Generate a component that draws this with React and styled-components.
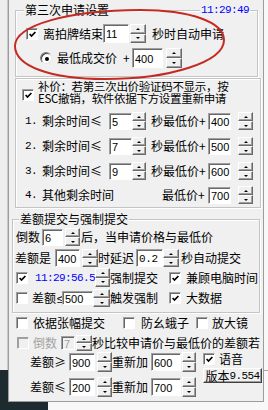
import React from "react";
import styled, { createGlobalStyle } from "styled-components";

const GlobalStyle = createGlobalStyle`
  html, body { margin: 0; padding: 0; background: #f8f8f8; }
  body {
    font-family: "Noto Sans CJK SC", "Noto Sans", sans-serif;
    font-size: 12px;
    color: #000;
  }
  #root { width: 268px; height: 410px; }
`;

const Screen = styled.div`
  position: relative;
  width: 268px;
  height: 410px;
  overflow: hidden;
  display: flex;
`;

const Edge = styled.div`
  width: ${(p) => p.$w}px;
  display: flex;
  flex-direction: column;
  flex-shrink: 0;
`;

const EdgePart = styled.div`
  box-sizing: border-box;
  height: ${(p) => (p.$h ? `${p.$h}px` : "auto")};
  width: ${(p) => (p.$w ? `${p.$w}px` : "auto")};
  flex: ${(p) => (p.$h ? "none" : 1)};
  background: ${(p) => p.$bg};
  border-right: ${(p) => (p.$lineR ? "1px solid #c8c8c8" : "none")};
  border-bottom: ${(p) => (p.$lineB ? "1px solid #a8a8a8" : "none")};
`;

const CenterCol = styled.div`
  width: 256px;
  display: flex;
  flex-direction: column;
  flex-shrink: 0;
`;

const Window = styled.div`
  box-sizing: border-box;
  width: 256px;
  height: 402px;
  background: #f0f0f0;
  border-left: 1px solid #9c9c9c;
  border-right: 1px solid #9c9c9c;
  border-bottom: 1px solid #9c9c9c;
  display: flex;
  flex-direction: column;
  align-items: flex-start;
`;

const BottomStrip = styled.div`
  flex: 1;
  display: flex;
`;

const Group = styled.div`
  position: relative;
  box-sizing: border-box;
  width: ${(p) => p.$w}px;
  margin: ${(p) => p.$mt}px 0 0 ${(p) => p.$ml}px;
  padding-bottom: ${(p) => p.$pb}px;
  border: 1px solid #c4c4c4;
  box-shadow: inset 1px 1px 0 #ffffff, 1px 1px 0 #ffffff;
  display: flex;
  flex-direction: column;
  align-items: flex-start;
  flex-shrink: 0;
`;

const GroupTitle = styled.span`
  position: absolute;
  top: -8px;
  left: ${(p) => p.$x}px;
  height: 14px;
  line-height: 14px;
  padding: 0 1px;
  background: #f0f0f0;
  white-space: nowrap;
`;

const TimeTag = styled.span`
  position: absolute;
  top: -7px;
  right: ${(p) => p.$right}px;
  height: 13px;
  line-height: 13px;
  padding: 0 1px;
  background: #f0f0f0;
  color: #0000ff;
  font-family: "Liberation Mono", monospace;
  font-size: 11px;
  letter-spacing: -0.6px;
  white-space: nowrap;
`;

const Row = styled.div`
  display: flex;
  align-items: ${(p) => p.$align || "center"};
  height: ${(p) => (p.$h ? `${p.$h}px` : "auto")};
  margin-top: ${(p) => p.$mt || 0}px;
  margin-left: ${(p) => p.$ml || 0}px;
  flex-shrink: 0;
`;

const Col = styled.div`
  display: flex;
  flex-direction: column;
  align-items: flex-start;
  margin-left: ${(p) => p.$ml || 0}px;
  margin-top: ${(p) => p.$mt || 0}px;
`;

const Label = styled.span`
  display: inline-block;
  flex-shrink: 0;
  width: ${(p) => (p.$w ? `${p.$w}px` : "auto")};
  margin-left: ${(p) => p.$ml || 0}px;
  line-height: 14px;
  white-space: nowrap;
  color: ${(p) => (p.$dim ? "#a3a3a3" : "#000")};
`;

const Sign = styled.span`
  font-family: "Liberation Sans", Arial, sans-serif;
  font-size: 12px;
  margin-left: 1px;
`;

const Mono = styled.span`
  display: inline-block;
  flex-shrink: 0;
  width: ${(p) => (p.$w ? `${p.$w}px` : "auto")};
  margin-left: ${(p) => p.$ml || 0}px;
  font-family: "Liberation Mono", monospace;
  font-size: 11px;
  letter-spacing: -0.6px;
  line-height: 14px;
  white-space: nowrap;
  color: ${(p) => (p.$blue ? "#0000ff" : "#000")};
`;

const Para = styled.div`
  margin-left: ${(p) => p.$ml}px;
  display: flex;
  flex-direction: column;
`;

const ParaLine = styled.span`
  height: 12px;
  line-height: 12px;
  font-size: 11.5px;
  letter-spacing: -0.3px;
  white-space: nowrap;
`;

const Edit = styled.div`
  box-sizing: border-box;
  flex-shrink: 0;
  width: ${(p) => p.$w}px;
  height: ${(p) => p.$h}px;
  margin-left: ${(p) => p.$ml || 0}px;
  background: ${(p) => (p.$off ? "#f0f0f0" : "#ffffff")};
  border: 1px solid;
  border-color: #a0a0a0 #ffffff #ffffff #a0a0a0;
  box-shadow: inset 1px 1px 0 #696969;
  padding: 1px 0 0 2px;
  display: flex;
  align-items: center;
  overflow: hidden;
  font-family: ${(p) =>
    p.$mono ? '"Liberation Mono", monospace' : '"Liberation Sans", Arial, sans-serif'};
  font-size: 11px;
  letter-spacing: ${(p) => (p.$mono ? "-0.4px" : "0")};
  color: ${(p) => (p.$off ? "#a0a0a0" : "#000")};
  white-space: nowrap;
`;

const SpinBox = styled.div`
  display: flex;
  flex-direction: column;
  flex-shrink: 0;
  width: ${(p) => p.$w}px;
  height: ${(p) => p.$h}px;
  margin-left: ${(p) => p.$ml || 0}px;
`;

const SpinBtn = styled.div`
  flex: 1;
  box-sizing: border-box;
  background: #f0f0f0;
  border: 1px solid;
  border-color: #ffffff #696969 #696969 #ffffff;
  box-shadow: inset -1px -1px 0 #a0a0a0;
  display: flex;
  align-items: center;
  justify-content: center;
`;

const Arrow = styled.span`
  width: 0;
  height: 0;
  border-left: 2px solid transparent;
  border-right: 2px solid transparent;
  ${(p) =>
    p.$down ? "border-top: 2px solid #000;" : "border-bottom: 2px solid #000;"}
`;

const Box = styled.span`
  box-sizing: border-box;
  flex-shrink: 0;
  width: ${(p) => p.$s || 12}px;
  height: ${(p) => p.$s || 12}px;
  margin-left: ${(p) => p.$ml || 0}px;
  margin-top: ${(p) => p.$mt || 0}px;
  background: ${(p) => (p.$off ? "#f0f0f0" : "#ffffff")};
  border: 1px solid;
  border-color: #a0a0a0 #ffffff #ffffff #a0a0a0;
  box-shadow: inset 1px 1px 0 ${(p) => (p.$off ? "#a0a0a0" : "#696969")};
  display: flex;
  align-items: center;
  justify-content: center;
  padding: 1px 0 0 1px;
`;

const RadioRing = styled.span`
  box-sizing: border-box;
  flex-shrink: 0;
  width: 12px;
  height: 12px;
  border-radius: 50%;
  background: #ffffff;
  border: 1px solid;
  border-color: #808080 #e8e8e8 #e8e8e8 #808080;
  box-shadow: inset 1px 1px 0 #404040;
  display: flex;
  align-items: center;
  justify-content: center;
`;

const Dot = styled.span`
  width: 4px;
  height: 4px;
  border-radius: 50%;
  background: #000;
  margin: 1px 0 0 1px;
`;

const Button = styled.div`
  box-sizing: border-box;
  width: ${(p) => p.$w}px;
  height: ${(p) => p.$h}px;
  margin-top: ${(p) => p.$mt || 0}px;
  background: #f0f0f0;
  border: 1px solid;
  border-color: #ffffff #404040 #404040 #ffffff;
  box-shadow: inset -1px -1px 0 #a0a0a0;
  display: flex;
  align-items: center;
  justify-content: center;
  line-height: 13px;
  white-space: nowrap;
`;

const Annotation = styled.svg`
  position: absolute;
  left: 0;
  top: 0;
  width: 268px;
  height: 100px;
  pointer-events: none;
`;

function Spin({ w, h, ml }) {
  return (
    <SpinBox $w={w} $h={h} $ml={ml}>
      <SpinBtn>
        <Arrow />
      </SpinBtn>
      <SpinBtn>
        <Arrow $down />
      </SpinBtn>
    </SpinBox>
  );
}

function Check({ on, off, ml, mt, s }) {
  return (
    <Box $ml={ml} $mt={mt} $off={off} $s={s}>
      {on && (
        <svg width="7" height="7" viewBox="0 0 7 7">
          <polyline
            points="0.6,3 2.5,5.1 6.4,1"
            fill="none"
            stroke="#000"
            strokeWidth="1.7"
          />
        </svg>
      )}
    </Box>
  );
}

const RadioWrap = styled.span`
  display: flex;
  margin-left: ${(p) => p.$ml || 0}px;
`;

function Radio({ ml }) {
  return (
    <RadioWrap $ml={ml}>
      <RadioRing>
        <Dot />
      </RadioRing>
    </RadioWrap>
  );
}

function PriceRow({ mt, num, label, val, price, other }) {
  return (
    <Row $h={18} $mt={mt} $ml={9}>
      <Mono $w={13}>{num}</Mono>
      {other ? (
        <>
          <Label $ml={4} $w={72}>其他剩余时间</Label>
          <Label $ml={48} $w={45}>最低价+</Label>
        </>
      ) : (
        <>
          <Label $ml={4} $w={63}>{label}</Label>
          <Edit $ml={4} $w={23} $h={17}>{val}</Edit>
          <Spin w={14} h={18} />
          <Label $ml={5} $w={56}>秒最低价+</Label>
        </>
      )}
      <Edit $ml={1} $w={23} $h={17}>{price}</Edit>
      <Spin ml={7} w={15} h={18} />
    </Row>
  );
}

function AddRow({ mt, sign, val, add }) {
  return (
    <Row $h={20} $mt={mt}>
      <Label $w={37}>{sign}</Label>
      <Edit $ml={2} $w={26} $h={18}>{val}</Edit>
      <Spin ml={2} w={15} h={20} />
      <Label $w={36}>重新加</Label>
      <Edit $ml={3} $w={30} $h={18}>{add}</Edit>
      <Spin ml={1} w={14} h={20} />
    </Row>
  );
}

export default function App() {
  return (
    <>
      <GlobalStyle />
      <Screen>
        <Edge $w={8}>
          <EdgePart $h={370} $bg="#eeeeee" $lineR />
          <EdgePart $bg="#1d2a30" />
        </Edge>

        <CenterCol>
          <Window>
            <Group $w={243} $ml={6} $mt={10} $pb={8}>
              <GroupTitle $x={8}>第三次申请设置</GroupTitle>
              <TimeTag $right={7}>11:29:49</TimeTag>
              <Row $h={19} $mt={13} $ml={10}>
                <Check on />
                <Label $ml={5} $w={60}>离拍牌结束</Label>
                <Edit $w={26} $h={19}>11</Edit>
                <Spin ml={1} w={16} h={19} />
                <Label $ml={6}>秒时自动申请</Label>
              </Row>
              <Row $h={20} $mt={5} $ml={24}>
                <Radio />
                <Label $ml={5} $w={60}>最低成交价</Label>
                <Label $ml={6} $w={6}>+</Label>
                <Edit $ml={3} $w={31} $h={20}>400</Edit>
                <Spin ml={3} w={16} h={20} />
              </Row>
            </Group>

            <Group $w={246} $ml={6} $mt={1} $pb={3}>
              <Row $align="flex-start" $mt={1} $ml={6}>
                <Check on mt={9} />
                <Para $ml={4}>
                  <ParaLine>补价：若第三次出价验证码不显示，按</ParaLine>
                  <ParaLine>ESC撤销，软件依据下方设置重新申请</ParaLine>
                </Para>
              </Row>
              <PriceRow mt={8} num="1." label="剩余时间≤" val="5" price="400" />
              <PriceRow mt={7} num="2." label="剩余时间≤" val="7" price="500" />
              <PriceRow mt={7} num="3." label="剩余时间≤" val="9" price="600" />
              <PriceRow mt={6} num="4." other price="700" />
            </Group>

            <Group $w={248} $ml={3} $mt={11} $pb={5}>
              <GroupTitle $x={6}>差额提交与强制提交</GroupTitle>
              <Row $h={18} $mt={8} $ml={3}>
                <Label $w={24}>倒数</Label>
                <Edit $ml={2} $w={21} $h={17}>6</Edit>
                <Spin ml={2} w={15} h={18} />
                <Label $ml={1}>后，当申请价格与最低价</Label>
              </Row>
              <Row $h={18} $mt={3} $ml={2}>
                <Label $w={36}>差额是</Label>
                <Edit $ml={4} $w={25} $h={18}>400</Edit>
                <Spin ml={2} w={16} h={18} />
                <Label $w={36}>时延迟</Label>
                <Edit $ml={2} $w={27} $h={18} $mono>0.2</Edit>
                <Spin w={16} h={18} />
                <Label $ml={2}>秒自动提交</Label>
              </Row>
              <Row $h={19} $mt={1} $ml={3}>
                <Check on />
                <Mono $ml={7} $w={58} $blue>11:29:56.5</Mono>
                <Spin ml={2} w={15} h={19} />
                <Label $w={48}>强制提交</Label>
                <Check on ml={11} />
                <Label $ml={5}>兼顾电脑时间</Label>
              </Row>
              <Row $h={18} $mt={2} $ml={3}>
                <Check />
                <Label $ml={4} $w={30}>
                  差额<Sign>≤</Sign>
                </Label>
                <Edit $w={31} $h={14}>500</Edit>
                <Spin w={17} h={18} />
                <Label $w={48}>触发强制</Label>
                <Check on ml={11} />
                <Label $ml={5}>大数据</Label>
              </Row>
            </Group>

            <Row $h={13} $mt={3} $ml={7}>
              <Check />
              <Label $ml={5} $w={72}>依据张幅提交</Label>
              <Check ml={18} />
              <Label $ml={6} $w={48}>防幺蛾子</Label>
              <Check ml={7} />
              <Label $ml={4}>放大镜</Label>
            </Row>

            <Row $h={16} $mt={6} $ml={8}>
              <Check off />
              <Label $ml={4} $w={24} $dim>倒数</Label>
              <Edit $ml={4} $w={14} $h={14} $off>7</Edit>
              <Spin ml={1} w={16} h={16} />
              <Label>秒比较申请价与最低价的差额若</Label>
            </Row>

            <Row $align="flex-start" $mt={1} $ml={21}>
              <Col>
                <AddRow sign="差额≥" val="900" add="600" />
                <AddRow mt={5} sign="差额≤" val="200" add="700" />
              </Col>
              <Col $ml={7} $mt={1}>
                <Row $h={12}>
                  <Check on />
                  <Label $ml={4}>语音</Label>
                </Row>
                <Button $w={59} $h={15} $mt={3}>
                  版本<Mono>9.554</Mono>
                </Button>
              </Col>
            </Row>
          </Window>
          <BottomStrip>
            <EdgePart $h={8} $w={40} $bg="#1d2a30" />
            <EdgePart $bg="#f8f8f8" />
          </BottomStrip>
        </CenterCol>

        <Edge $w={4}>
          <EdgePart $h={371} $bg="#f8f8f8" $lineB />
          <EdgePart $bg="#f8f8f8" />
        </Edge>

        <Annotation viewBox="0 0 268 100">
          <path
            d="M 15 46 C 15 25, 70 10, 140 10 C 190 10, 224 22, 224 40 C 224 62, 170 79, 105 79 C 50 79, 15 66, 15 46 Z"
            fill="none"
            stroke="#c42a22"
            strokeWidth="2"
          />
        </Annotation>
      </Screen>
    </>
  );
}
